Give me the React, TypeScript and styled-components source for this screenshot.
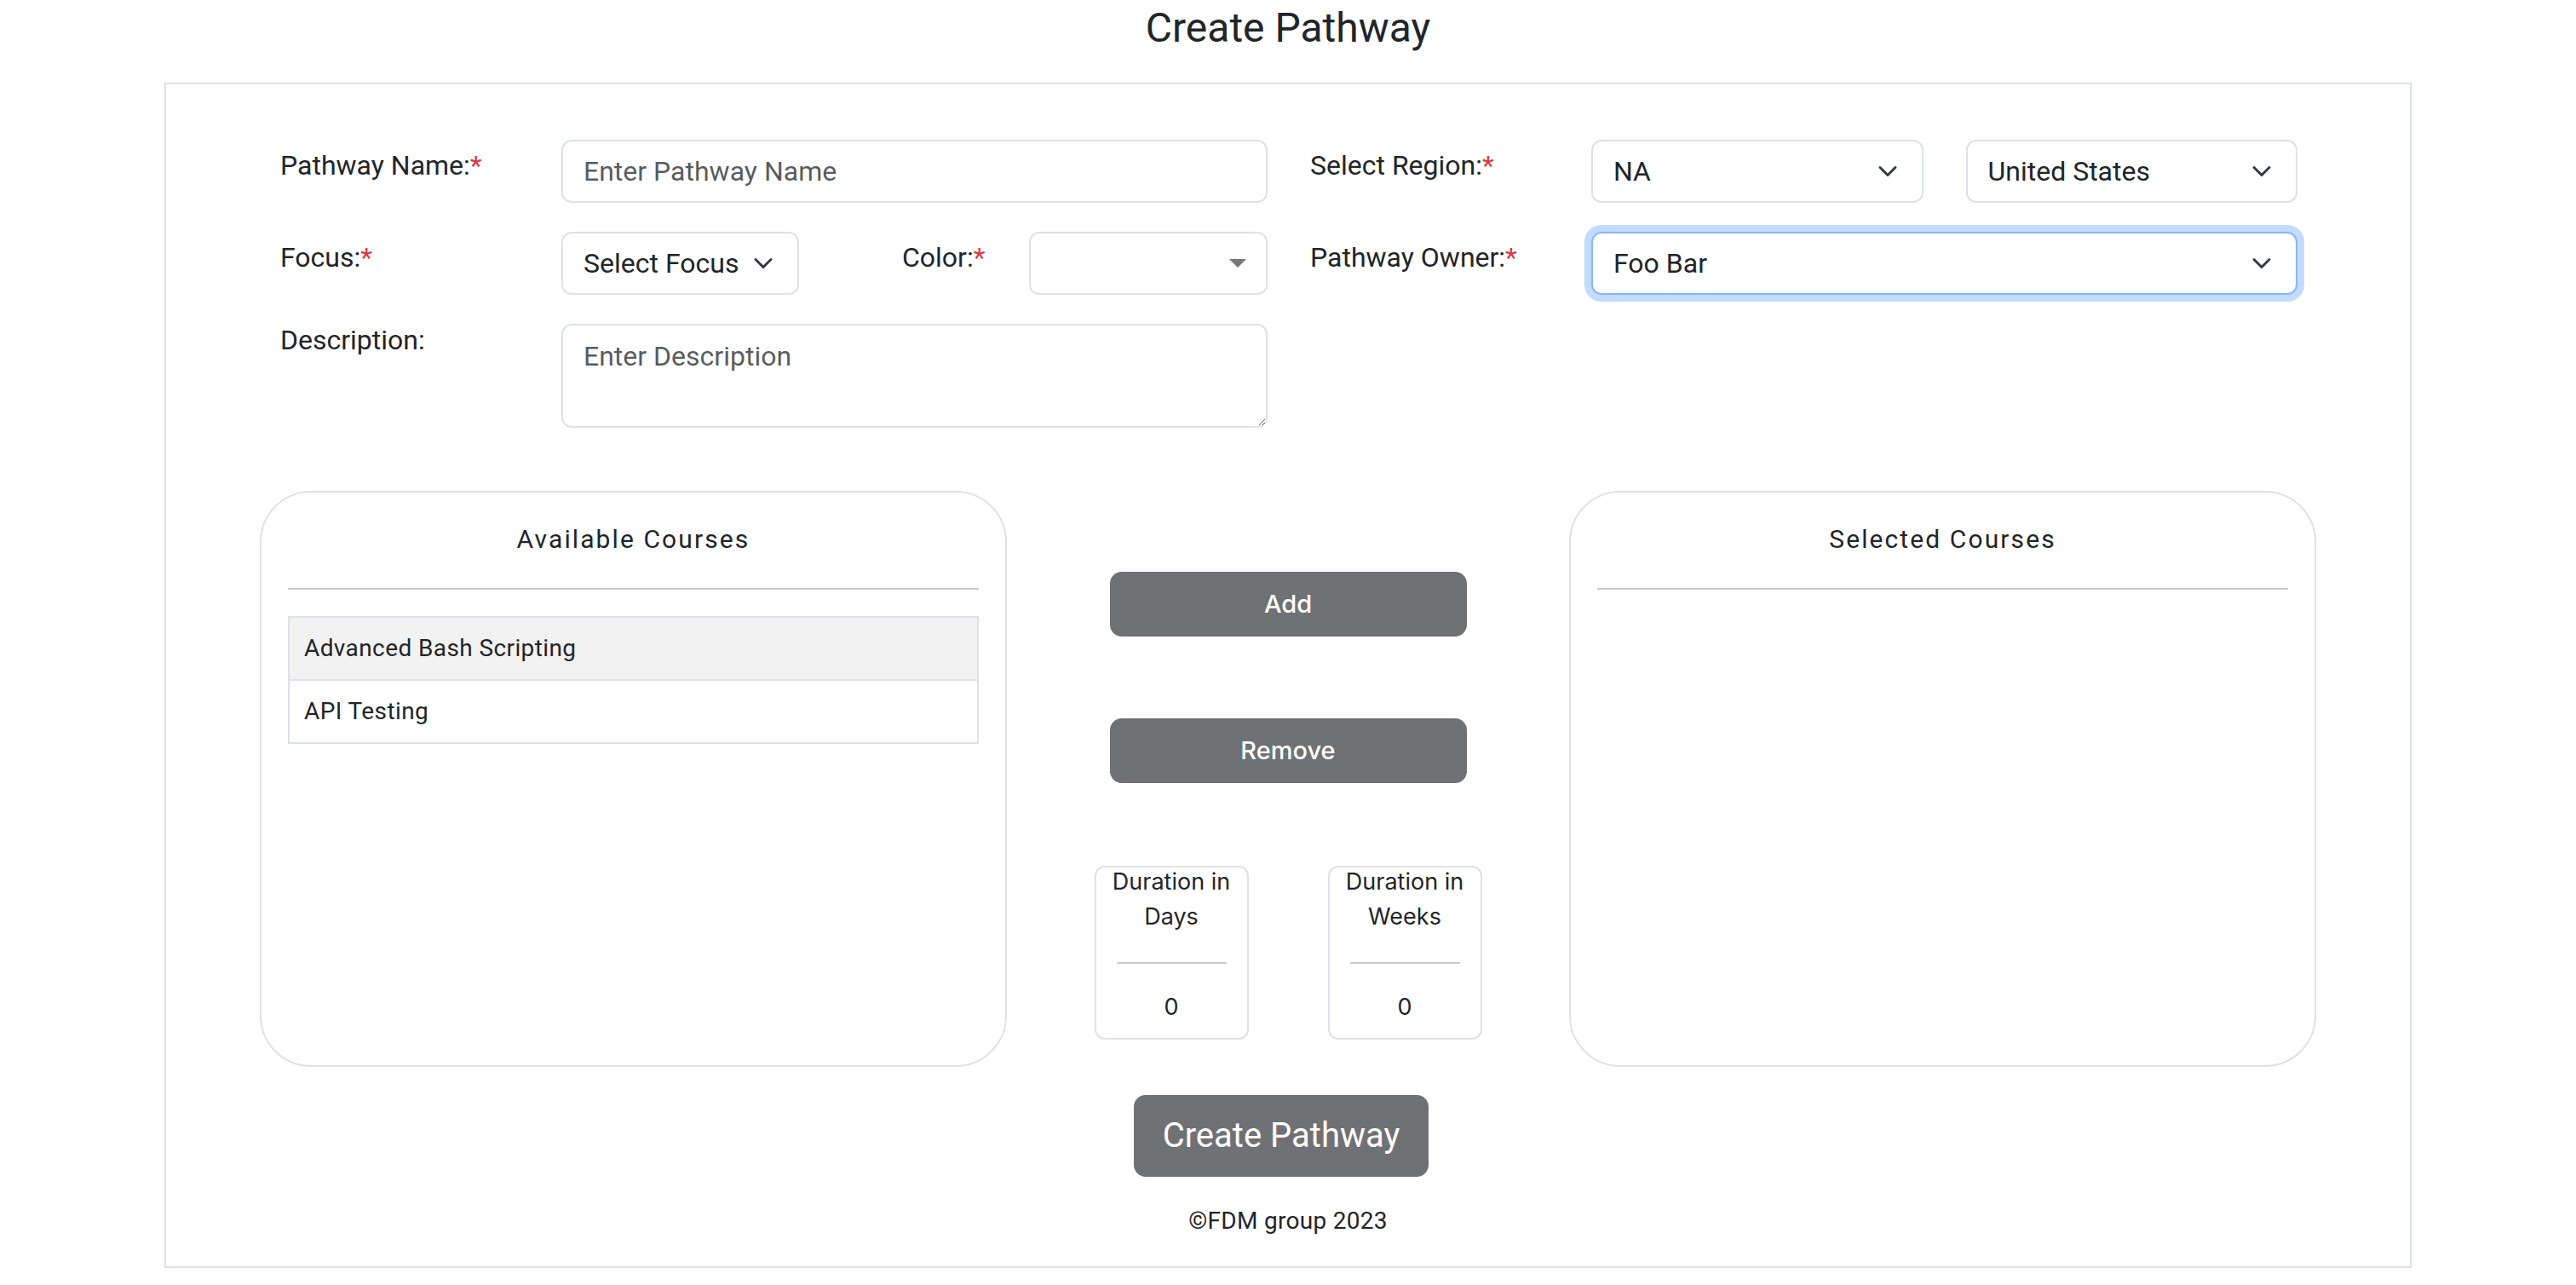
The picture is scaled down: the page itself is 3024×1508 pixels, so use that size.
import React from 'react';
import styled, { createGlobalStyle } from 'styled-components';

const GlobalStyle = createGlobalStyle`
  body {
    margin: 0;
    background: #ffffff;
    color: #212529;
    font-family: Roboto, 'Liberation Sans', Arial, sans-serif;
  }

  * {
    box-sizing: border-box;
  }
`;

const Title = styled.h1`
  margin: 0;
  padding-top: 4px;
  font-size: 48px;
  line-height: 57.6px;
  font-weight: 400;
  text-align: center;
`;

const Card = styled.div`
  width: 2638px;
  margin: 35px auto 0;
  border: 2px solid #dee2e6;
  padding: 65px 0 32px;
`;

const FormGrid = styled.div`
  display: flex;
  gap: 50px;
  padding: 0 134px;
`;

const FormColumn = styled.div`
  display: flex;
  flex-direction: column;
  gap: 34px;
  width: 1159px;
`;

const FieldRow = styled.div`
  display: grid;
  grid-template-columns: 330px 829px;
  align-items: start;
`;

const Label = styled.label<{ $offset?: number }>`
  display: block;
  margin-top: ${({ $offset }) => $offset ?? 6}px;
  font-size: 32px;
  line-height: 48px;
  white-space: nowrap;
`;

const Required = styled.span`
  color: #dc3545;
`;

const controlBase = `
  width: 100%;
  border: 2px solid #dee2e6;
  border-radius: 12px;
  background: #ffffff;
  color: #212529;
  font-family: Roboto, 'Liberation Sans', Arial, sans-serif;
  font-size: 32px;
  line-height: 48px;
  outline: none;

  &::placeholder {
    color: rgba(33, 37, 41, 0.75);
  }
`;

const TextInput = styled.input`
  ${controlBase}
  height: 74px;
  padding: 11px 24px;
`;

const TextArea = styled.textarea`
  ${controlBase}
  height: 122px;
  padding: 12px 24px;
  resize: vertical;
`;

const SelectBox = styled.div<{ $focused?: boolean }>`
  ${controlBase}
  height: 74px;
  display: flex;
  align-items: center;
  justify-content: space-between;
  padding: 0 24px;
  white-space: nowrap;
  border-color: ${({ $focused }) => ($focused ? '#86b7fe' : '#dee2e6')};
  box-shadow: ${({ $focused }) => ($focused ? '0 0 0 8px rgba(13, 110, 253, 0.25)' : 'none')};
`;

const ColorBox = styled.div`
  ${controlBase}
  height: 74px;
  display: flex;
  align-items: center;
  justify-content: flex-end;
  padding: 0 23px 0 24px;
`;

const ChevronIcon = styled.svg`
  flex: none;
  margin-right: 4px;
`;

const SelectPair = styled.div`
  display: grid;
  grid-template-columns: 1fr 1fr;
  gap: 50px;
`;

const FocusColorRow = styled.div`
  display: grid;
  grid-template-columns: 279px 1fr 280px;
  align-items: start;
`;

const InlineLabel = styled(Label)`
  padding-left: 121px;
`;

const CoursesRow = styled.div`
  display: grid;
  grid-template-columns: 877px 660px 877px;
  width: 2414px;
  margin: 74px auto 0;
`;

const CoursePanel = styled.div`
  height: 676px;
  border: 2px solid #dee2e6;
  border-radius: 60px;
  padding: 34px 31px 0;
`;

const PanelTitle = styled.div`
  font-size: 30px;
  line-height: 42px;
  letter-spacing: 2.1px;
  text-align: center;
  margin-bottom: 36px;
`;

const PanelDivider = styled.hr`
  margin: 0;
  height: 2px;
  border: none;
  background: #c8c9ca;
`;

const CourseList = styled.ul`
  list-style: none;
  margin: 31px 0 0;
  padding: 0;
  border-top: 2px solid #dee2e6;
`;

const CourseItem = styled.li<{ $active?: boolean }>`
  padding: 15px 17px;
  font-size: 28px;
  line-height: 42px;
  letter-spacing: 0.4px;
  background: ${({ $active }) => ($active ? '#f2f2f2' : '#ffffff')};
  border: 2px solid #dee2e6;
  border-top: none;
`;

const ActionColumn = styled.div`
  display: flex;
  flex-direction: column;
  align-items: center;
  gap: 96px;
  padding-top: 95px;
`;

const ActionButton = styled.button`
  width: 419px;
  height: 76px;
  border: none;
  border-radius: 14px;
  background: #707174;
  color: #ffffff;
  font-family: Inter, 'Open Sans', sans-serif;
  font-size: 29px;
  font-weight: 500;
  cursor: pointer;
`;

const DurationRow = styled.div`
  display: flex;
  justify-content: center;
  gap: 93px;
  margin-top: 1px;
`;

const DurationCard = styled.div`
  width: 181px;
  height: 204px;
  border: 2px solid #dee2e6;
  border-radius: 12px;
  text-align: center;
  font-family: Inter, 'Open Sans', sans-serif;
  font-size: 27px;
  line-height: 41px;
`;

const DurationTitle = styled.div`
  margin-top: -4px;
`;

const DurationDivider = styled.hr`
  margin: 33px 24px 30px;
  height: 2px;
  border: none;
  background: #c8c9ca;
`;

const SubmitRow = styled.div`
  display: flex;
  justify-content: center;
  padding-right: 16px;
  margin-top: 33px;
`;

const SubmitButton = styled.button`
  width: 346px;
  height: 96px;
  border: none;
  border-radius: 14px;
  background: #707174;
  color: #ffffff;
  font-family: Roboto, 'Liberation Sans', Arial, sans-serif;
  font-size: 40px;
  cursor: pointer;
`;

const Footer = styled.div`
  margin-top: 31px;
  text-align: center;
  font-size: 28px;
  line-height: 42px;
  letter-spacing: 0.3px;
`;

function Chevron () {
  return (
    <ChevronIcon width='24' height='24' viewBox='0 0 16 16' fill='none'>
      <path d='m2 5 6 6 6-6' stroke='#343a40' strokeWidth='2' strokeLinecap='round' strokeLinejoin='round' />
    </ChevronIcon>
  );
}

function Select ({ value, focused }: { value: string; focused?: boolean }) {
  return (
    <SelectBox $focused={focused}>
      <span>{value}</span>
      <Chevron />
    </SelectBox>
  );
}

function Duration ({ unit, value }: { unit: string; value: number }) {
  return (
    <DurationCard>
      <DurationTitle>Duration in<br />{unit}</DurationTitle>
      <DurationDivider />
      <div>{value}</div>
    </DurationCard>
  );
}

const courses = ['Advanced Bash Scripting', 'API Testing'];

export default function App () {
  return (
    <>
      <GlobalStyle />
      <Title>Create Pathway</Title>
      <Card>
        <FormGrid>
          <FormColumn>
            <FieldRow>
              <Label>Pathway Name:<Required>*</Required></Label>
              <TextInput placeholder='Enter Pathway Name' />
            </FieldRow>
            <FieldRow>
              <Label>Focus:<Required>*</Required></Label>
              <FocusColorRow>
                <Select value='Select Focus' />
                <InlineLabel>Color:<Required>*</Required></InlineLabel>
                <ColorBox>
                  <svg width='20' height='10' viewBox='0 0 20 10'>
                    <polygon points='0,0 20,0 10,10' fill='#777777' />
                  </svg>
                </ColorBox>
              </FocusColorRow>
            </FieldRow>
            <FieldRow>
              <Label $offset={-5}>Description:</Label>
              <TextArea placeholder='Enter Description' />
            </FieldRow>
          </FormColumn>
          <FormColumn>
            <FieldRow>
              <Label>Select Region:<Required>*</Required></Label>
              <SelectPair>
                <Select value='NA' />
                <Select value='United States' />
              </SelectPair>
            </FieldRow>
            <FieldRow>
              <Label>Pathway Owner:<Required>*</Required></Label>
              <Select value='Foo Bar' focused />
            </FieldRow>
          </FormColumn>
        </FormGrid>

        <CoursesRow>
          <CoursePanel>
            <PanelTitle>Available Courses</PanelTitle>
            <PanelDivider />
            <CourseList>
              {courses.map((c, i) => (
                <CourseItem key={c} $active={i === 0}>{c}</CourseItem>
              ))}
            </CourseList>
          </CoursePanel>

          <ActionColumn>
            <ActionButton>Add</ActionButton>
            <ActionButton>Remove</ActionButton>
            <DurationRow>
              <Duration unit='Days' value={0} />
              <Duration unit='Weeks' value={0} />
            </DurationRow>
          </ActionColumn>

          <CoursePanel>
            <PanelTitle>Selected Courses</PanelTitle>
            <PanelDivider />
          </CoursePanel>
        </CoursesRow>

        <SubmitRow>
          <SubmitButton>Create Pathway</SubmitButton>
        </SubmitRow>
        <Footer>©FDM group 2023</Footer>
      </Card>
    </>
  );
}
